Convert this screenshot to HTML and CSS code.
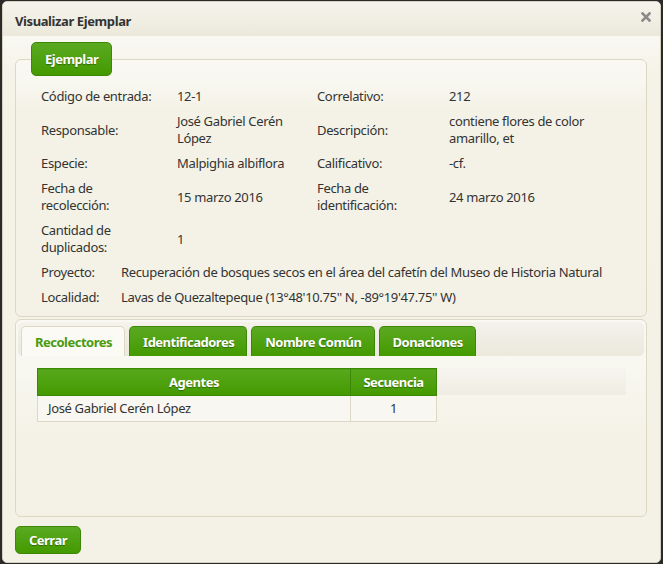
FILE: index.html
```html
<!DOCTYPE html>
<html lang="es">
<head>
<meta charset="utf-8">
<title>Visualizar Ejemplar</title>
<link rel="stylesheet" href="styles.css">
</head>
<body>
<div class="dialog">
  <div class="titlebar">
    <span class="title">Visualizar Ejemplar</span>
    <span class="close" aria-label="cerrar">
      <svg width="10" height="10" viewBox="0 0 10 10"><path d="M1.5 1.5 L8.5 8.5 M8.5 1.5 L1.5 8.5" stroke="#8a8a86" stroke-width="2.6" stroke-linecap="square"/></svg>
    </span>
  </div>
  <div class="content">
    <fieldset class="ejemplar">
      <legend class="btn legend">Ejemplar</legend>
      <div class="grid">
        <div class="lbl">Código de entrada:</div><div class="val">12-1</div>
        <div class="lbl">Correlativo:</div><div class="val">212</div>

        <div class="lbl">Responsable:</div><div class="val">José Gabriel Cerén López</div>
        <div class="lbl">Descripción:</div><div class="val">contiene flores de color amarillo, et</div>

        <div class="lbl">Especie:</div><div class="val">Malpighia albiflora</div>
        <div class="lbl">Calificativo:</div><div class="val">-cf.</div>

        <div class="lbl">Fecha de recolección:</div><div class="val">15 marzo 2016</div>
        <div class="lbl">Fecha de identificación:</div><div class="val">24 marzo 2016</div>

        <div class="lbl">Cantidad de duplicados:</div><div class="val">1</div>
        <div class="lbl"></div><div class="val"></div>
      </div>
      <div class="grid2">
        <div class="lbl">Proyecto:</div><div class="val">Recuperación de bosques secos en el área del cafetín del Museo de Historia Natural</div>
        <div class="lbl">Localidad:</div><div class="val">Lavas de Quezaltepeque (13°48'10.75'' N, -89°19'47.75'' W)</div>
      </div>
    </fieldset>

    <div class="tabs">
      <ul class="tabbar">
        <li class="tab active">Recolectores</li>
        <li class="tab">Identificadores</li>
        <li class="tab">Nombre Común</li>
        <li class="tab">Donaciones</li>
      </ul>
      <div class="panel">
        <div class="gridwrap">
          <table class="data">
            <thead>
              <tr><th class="c-agentes">Agentes</th><th class="c-sec">Secuencia</th></tr>
            </thead>
            <tbody>
              <tr><td>José Gabriel Cerén López</td><td class="num">1</td></tr>
            </tbody>
          </table>
        </div>
      </div>
    </div>
  </div>
  <div class="footer">
    <button class="btn cerrar">Cerrar</button>
  </div>
</div>
</body>
</html>
```

FILE: styles.css
```css
* { box-sizing: border-box; }
html, body { margin: 0; padding: 0; }
body {
  background: #2a2a28;
  width: 663px;
  height: 564px;
  padding: 1px 2px 1px 2px;
  font-family: "Noto Sans", "DejaVu Sans", sans-serif;
  font-size: 13px;
  letter-spacing: -0.35px;
  color: #333;
}
.dialog {
  width: 659px;
  height: 562px;
  border: 1px solid #d4d0bf;
  border-radius: 5px;
  background: #f4f2e6;
  display: flex;
  flex-direction: column;
  overflow: hidden;
}
.titlebar {
  height: 34px;
  flex: none;
  display: flex;
  align-items: center;
  justify-content: space-between;
  padding: 4px 9px 0 12px;
  background: linear-gradient(#f5f3eb 0%, #f1eee4 50%, #ebe8db 100%);
}
.title {
  font-weight: bold;
  font-size: 13px;
  letter-spacing: -0.4px;
  color: #333;
}
.close {
  display: flex;
  margin-top: -8px;
}
.content {
  flex: 1;
  padding: 6px 13px 0 12px;
  background: linear-gradient(#f9f8f2 0px, #f5f3e8 40px, #f4f2e6 100%);
}
fieldset.ejemplar {
  margin: 0;
  padding: 0 0 8px 0;
  border: 1px solid #ddd8c3;
  border-radius: 6px;
  background: linear-gradient(#f9f8f2 0px, #f8f7f0 22px, #f4f2e6 50px, #f4f2e6 100%);
  height: 275px;
}
.btn {
  background: linear-gradient(#5ba922, #449a00);
  border: 1px solid #3c8806;
  border-radius: 5px;
  color: #fff;
  font-family: "Noto Sans", "DejaVu Sans", sans-serif;
  font-weight: bold;
  font-size: 13px;
  letter-spacing: -0.5px;
  text-shadow: 0 1px 1px rgba(0,0,0,0.35);
}
legend.legend {
  margin-left: 15px;
  height: 34px;
  padding: 0 13px;
  line-height: 32px;
}
.grid {
  display: grid;
  grid-template-columns: 136px 140px 132px 150px;
  padding: 8px 0 0 25px;
  line-height: 17px;
}
.grid .lbl, .grid .val {
  padding: 4px 8px 4px 0;
  display: flex;
  align-items: center;
}
.grid .lbl { padding-right: 16px; }
.grid2 {
  display: grid;
  grid-template-columns: 80px 1fr;
  padding-left: 25px;
  line-height: 17px;
}
.grid2 .lbl, .grid2 .val {
  padding: 4px 0;
  white-space: nowrap;
}
.tabs {
  margin-top: 2px;
  height: 198px;
  border: 1px solid #ddd8c3;
  border-radius: 6px;
  padding: 2px;
  background: linear-gradient(#f9f8f2 0px, #f8f7f0 50px, #f4f2e6 120px);
}
.tabbar {
  list-style: none;
  margin: 0;
  padding: 3px 0 0 3px;
  height: 34px;
  display: flex;
  gap: 4px;
  align-items: flex-end;
  border-radius: 5px;
  background: linear-gradient(#f4f2eb, #ebe8dc);
}
.tab {
  height: 30px;
  padding: 0 12px 0 13px;
  display: flex;
  align-items: center;
  border: 1px solid #3c8806;
  border-bottom: none;
  border-radius: 5px 5px 0 0;
  background: linear-gradient(#5ba922, #449a00);
  color: #fff;
  font-weight: bold;
  letter-spacing: -0.5px;
  text-shadow: 0 1px 1px rgba(0,0,0,0.35);
}
.tab.active {
  background: #fbfaf5;
  border-color: #ddd8c3;
  color: #4a9b0f;
  text-shadow: none;
}
.panel {
  padding: 12px 17px 0 19px;
}
.gridwrap {
  width: 589px;
  background: linear-gradient(#f6f4ee, #f3f1e8 50%, #efece2) no-repeat;
  background-size: 100% 27px;
}
table.data {
  border-collapse: collapse;
  width: 400px;
}
table.data th {
  height: 27px;
  padding: 0;
  background: linear-gradient(#58a81d, #449a00);
  border: 1px solid #3c8806;
  color: #fff;
  font-weight: bold;
  font-size: 13px;
  letter-spacing: -0.5px;
  text-shadow: 0 1px 1px rgba(0,0,0,0.35);
}
th.c-agentes { width: 313px; }
table.data td {
  height: 26px;
  padding: 0 10px;
  background: #f8f7f1;
  border: 1px solid #dcd8c5;
  line-height: 17px;
}
table.data td.num { text-align: center; }
.footer {
  flex: none;
  height: 47px;
  padding: 9px 0 0 12px;
}
.cerrar {
  width: 66px;
  height: 28px;
  padding: 0;
  cursor: pointer;
}
```
